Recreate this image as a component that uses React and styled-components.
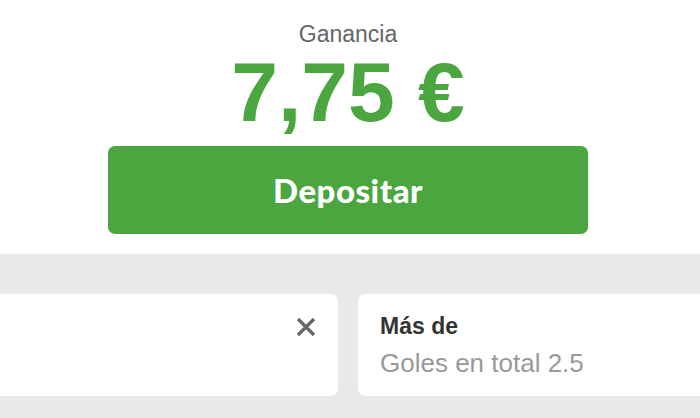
import React from "react";
import styled, { createGlobalStyle } from "styled-components";

const GlobalStyle = createGlobalStyle`
  body {
    margin: 0;
    font-family: "Liberation Sans", Arial, sans-serif;
    background: #e9e9e9;
  }
`;

const Page = styled.div`
  width: 700px;
  height: 418px;
  overflow: hidden;
  display: flex;
  flex-direction: column;
`;

const Summary = styled.div`
  background: #ffffff;
  display: flex;
  flex-direction: column;
  align-items: center;
  padding: 22px 4px 20px 0;
`;

const Label = styled.div`
  font-size: 23px;
  line-height: 24px;
  color: #666666;
`;

const Amount = styled.div`
  margin-top: 6px;
  font-size: 84px;
  line-height: 80px;
  font-weight: 700;
  color: #4ba63f;
`;

const Button = styled.button`
  margin-top: 14px;
  width: 480px;
  height: 88px;
  border: none;
  border-radius: 7px;
  background: #4ba63f;
  color: #ffffff;
  font-family: Lato, "Open Sans", sans-serif;
  font-weight: 900;
  font-size: 33px;
  letter-spacing: 0.5px;
  cursor: pointer;
`;

const Slips = styled.div`
  flex: 1;
  padding-top: 40px;
  overflow: hidden;
`;

const Track = styled.div`
  display: flex;
  gap: 20px;
  margin-left: -22px;
`;

const Card = styled.div`
  flex: 0 0 360px;
  height: 102px;
  box-sizing: border-box;
  background: #ffffff;
  border-radius: 7px;
  padding: 18px 22px;
  display: flex;
  justify-content: space-between;
  align-items: flex-start;
`;

const Info = styled.div`
  display: flex;
  flex-direction: column;
`;

const Title = styled.div`
  font-size: 23px;
  line-height: 28px;
  font-weight: 700;
  color: #333333;
`;

const Subtitle = styled.div`
  margin-top: 8px;
  font-size: 26px;
  line-height: 30px;
  color: #999999;
`;

const Close = styled.div`
  margin-left: auto;
  margin-top: 5px;
  width: 20px;
  height: 20px;
  cursor: pointer;
`;

const CloseIcon = () => (
  <svg width="20" height="20" viewBox="0 0 20 20">
    <path d="M2 2 L18 18 M18 2 L2 18" stroke="#666666" strokeWidth="3.2" />
  </svg>
);

const App = () => {
  return (
    <Page>
      <GlobalStyle />
      <Summary>
        <Label>Ganancia</Label>
        <Amount>7,75 €</Amount>
        <Button>Depositar</Button>
      </Summary>
      <Slips>
        <Track>
          <Card>
            <Close>
              <CloseIcon />
            </Close>
          </Card>
          <Card>
            <Info>
              <Title>Más de</Title>
              <Subtitle>Goles en total 2.5</Subtitle>
            </Info>
          </Card>
        </Track>
      </Slips>
    </Page>
  );
};

export default App;
